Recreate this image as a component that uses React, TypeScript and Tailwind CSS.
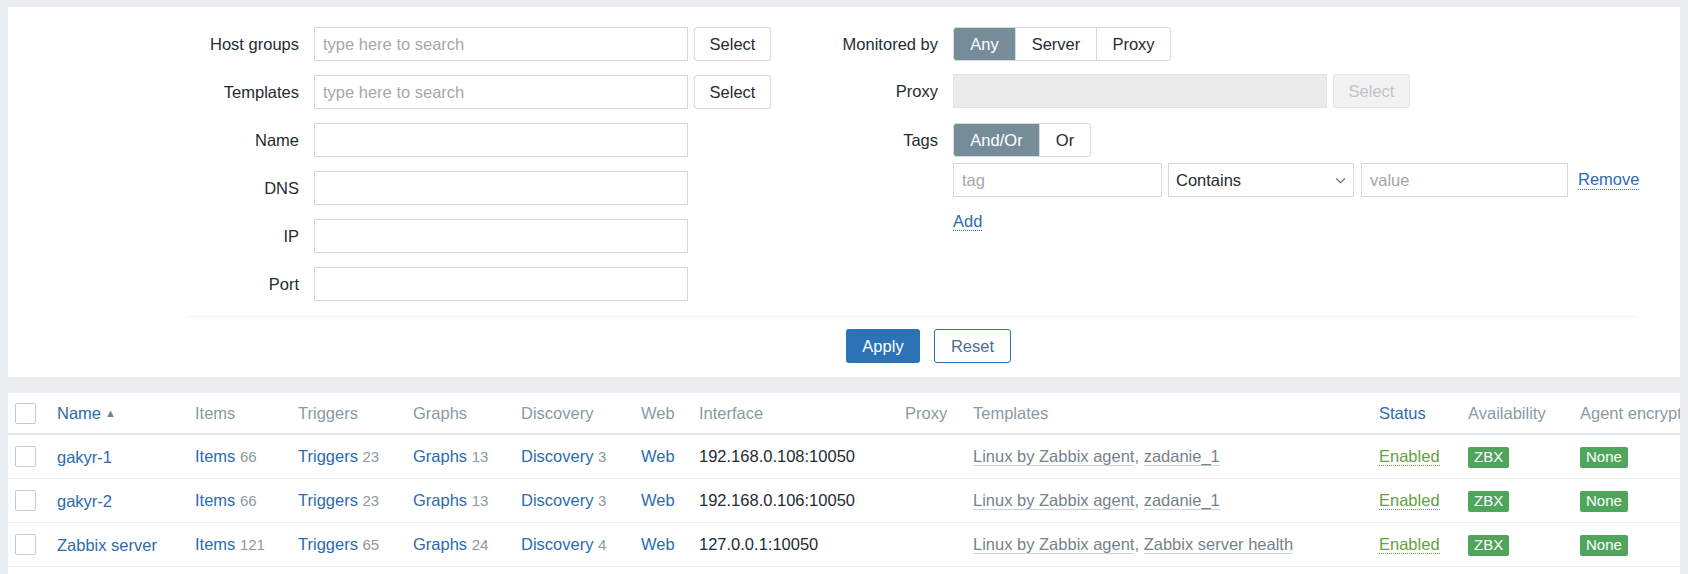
import React from 'react';

const font = { fontFamily: '"Liberation Sans", Arial, sans-serif' };

function Label({ w, children }: { w: string; children: React.ReactNode }) {
  return <div className={`${w} shrink-0 pr-[15px] text-right text-[#1f2c33]`}>{children}</div>;
}

function TextInput({ w, placeholder, disabled }: { w: string; placeholder?: string; disabled?: boolean }) {
  return (
    <div
      className={`${w} h-[34px] shrink-0 border px-[8px] flex items-center ${
        disabled ? 'bg-[#ebebeb] border-[#e3e3e3]' : 'bg-white border-[#d6dadd]'
      }`}
    >
      {placeholder ? <span className="text-[#a3a9ad]">{placeholder}</span> : null}
    </div>
  );
}

function SelectButton({ disabled }: { disabled?: boolean }) {
  return (
    <div
      className={`ml-[6px] w-[77px] h-[34px] shrink-0 rounded-[3px] border flex items-center justify-center ${
        disabled ? 'bg-[#f2f2f2] border-[#e6e6e6] text-[#bfc4c7]' : 'bg-white border-[#d6dadd] text-[#1f2c33]'
      }`}
    >
      Select
    </div>
  );
}

function Segmented({ items }: { items: { label: string; w: string; active?: boolean }[] }) {
  return (
    <div className="flex h-[34px] rounded-[3px] border border-[#d6dadd] overflow-hidden">
      {items.map((it, i) => (
        <div
          key={it.label}
          className={`${it.w} flex items-center justify-center ${i > 0 ? 'border-l border-[#d6dadd]' : ''} ${
            it.active ? 'bg-[#768d99] text-white' : 'bg-white text-[#1f2c33]'
          }`}
        >
          {it.label}
        </div>
      ))}
    </div>
  );
}

function Checkbox() {
  return <div className="w-[21px] h-[21px] rounded-[2px] border border-[#c3cbd0] bg-white" />;
}

const cols =
  'grid grid-cols-[49px_138px_103px_115px_108px_120px_58px_206px_68px_406px_89px_112px_200px] items-center';

const link = 'text-[#2b6cae]';
const muted = 'text-[#8a9aa3]';

const rows = [
  {
    name: 'gakyr-1',
    items: '66',
    triggers: '23',
    graphs: '13',
    discovery: '3',
    iface: '192.168.0.108:10050',
    t2: 'zadanie_1',
  },
  {
    name: 'gakyr-2',
    items: '66',
    triggers: '23',
    graphs: '13',
    discovery: '3',
    iface: '192.168.0.106:10050',
    t2: 'zadanie_1',
  },
  {
    name: 'Zabbix server',
    items: '121',
    triggers: '65',
    graphs: '24',
    discovery: '4',
    iface: '127.0.0.1:10050',
    t2: 'Zabbix server health',
  },
];

function Badge({ children }: { children: React.ReactNode }) {
  return (
    <span className="inline-flex items-center h-[21px] px-[6px] rounded-[2px] bg-[#4fa55b] text-white text-[15px]">
      {children}
    </span>
  );
}

export default function App() {
  return (
    <div
      className="w-[1688px] h-[574px] bg-[#ebeef0] px-[8px] pt-[7px] overflow-hidden text-[16.5px] flex flex-col"
      style={font}
    >
      {/* filter */}
      <div className="bg-white pt-[20px] pb-[14px]">
        <div className="flex pl-[180px]">
          <div className="w-[584px] flex flex-col gap-[14px]">
            <div className="flex items-center">
              <Label w="w-[126px]">Host groups</Label>
              <TextInput w="w-[374px]" placeholder="type here to search" />
              <SelectButton />
            </div>
            <div className="flex items-center">
              <Label w="w-[126px]">Templates</Label>
              <TextInput w="w-[374px]" placeholder="type here to search" />
              <SelectButton />
            </div>
            {['Name', 'DNS', 'IP', 'Port'].map((l) => (
              <div key={l} className="flex items-center">
                <Label w="w-[126px]">{l}</Label>
                <TextInput w="w-[374px]" />
              </div>
            ))}
          </div>
          <div className="flex flex-col">
            <div className="flex items-center">
              <Label w="w-[181px]">Monitored by</Label>
              <Segmented
                items={[
                  { label: 'Any', w: 'w-[61px]', active: true },
                  { label: 'Server', w: 'w-[81px]' },
                  { label: 'Proxy', w: 'w-[74px]' },
                ]}
              />
            </div>
            <div className="flex items-center mt-[13px]">
              <Label w="w-[181px]">Proxy</Label>
              <TextInput w="w-[374px]" disabled />
              <SelectButton disabled />
            </div>
            <div className="flex items-center mt-[15px]">
              <Label w="w-[181px]">Tags</Label>
              <Segmented
                items={[
                  { label: 'And/Or', w: 'w-[85px]', active: true },
                  { label: 'Or', w: 'w-[51px]' },
                ]}
              />
            </div>
            <div className="flex items-center mt-[6px] pl-[181px]">
              <TextInput w="w-[209px]" placeholder="tag" />
              <div className="ml-[6px] w-[186px] h-[34px] border border-[#d6dadd] flex items-center justify-between px-[7px] text-[#1f2c33]">
                <span>Contains</span>
                <svg width="11" height="7" viewBox="0 0 12 8" fill="none">
                  <path d="M1 1.5 6 6.5 11 1.5" stroke="#666" strokeWidth="1.3" />
                </svg>
              </div>
              <div className="ml-[7px]">
                <TextInput w="w-[207px]" placeholder="value" />
              </div>
              <span className={`ml-[10px] ${link} border-b border-dotted border-[#2b6cae] leading-[19px]`}>Remove</span>
            </div>
            <div className="pl-[181px] mt-[12px]">
              <span className={`${link} border-b border-dotted border-[#2b6cae] leading-[19px]`}>Add</span>
            </div>
          </div>
        </div>
        <div className="mt-[15px] ml-[180px] w-[1448px] h-px bg-[#eef0f2]" />
        <div className="mt-[12px] flex pl-[838px] gap-[14px]">
          <div className="w-[74px] h-[34px] rounded-[3px] bg-[#2b73b6] text-white flex items-center justify-center">
            Apply
          </div>
          <div className="w-[77px] h-[34px] rounded-[3px] border border-[#2b73b6] bg-white text-[#4a6f92] flex items-center justify-center">
            Reset
          </div>
        </div>
      </div>

      {/* table */}
      <div className="mt-[16px] bg-white overflow-hidden flex-1">
        <div className={`${cols} h-[42px] border-b-2 border-[#e4e8eb] text-[#8a9aa3] whitespace-nowrap`}>
          <div className="pl-[7px] flex">
            <Checkbox />
          </div>
          <div className={`${link} flex items-center gap-[4px]`}>
            Name <span className="text-[11px] text-[#6f8593]">▲</span>
          </div>
          <div>Items</div>
          <div>Triggers</div>
          <div>Graphs</div>
          <div>Discovery</div>
          <div>Web</div>
          <div>Interface</div>
          <div>Proxy</div>
          <div>Templates</div>
          <div className={link}>Status</div>
          <div>Availability</div>
          <div>Agent encryption</div>
        </div>
        {rows.map((r) => (
          <div key={r.name} className={`${cols} h-[44px] border-b border-[#eceff1] whitespace-nowrap`}>
            <div className="pl-[7px] flex">
              <Checkbox />
            </div>
            <div className={`${link} pt-[2px]`}>{r.name}</div>
            <div>
              <span className={link}>Items</span> <span className={`${muted} text-[15px]`}>{r.items}</span>
            </div>
            <div>
              <span className={link}>Triggers</span> <span className={`${muted} text-[15px]`}>{r.triggers}</span>
            </div>
            <div>
              <span className={link}>Graphs</span> <span className={`${muted} text-[15px]`}>{r.graphs}</span>
            </div>
            <div>
              <span className={link}>Discovery</span> <span className={`${muted} text-[15px]`}>{r.discovery}</span>
            </div>
            <div className={link}>Web</div>
            <div className="text-[#1f2c33]">{r.iface}</div>
            <div />
            <div className="text-[#75838b]">
              <span className="border-b border-[#cdd3d7]">Linux by Zabbix agent</span>,{' '}
              <span className="border-b border-[#cdd3d7]">{r.t2}</span>
            </div>
            <div>
              <span className="text-[#66a03f] border-b border-dotted border-[#66a03f] leading-[19px]">Enabled</span>
            </div>
            <div>
              <Badge>ZBX</Badge>
            </div>
            <div>
              <Badge>None</Badge>
            </div>
          </div>
        ))}
      </div>
    </div>
  );
}
